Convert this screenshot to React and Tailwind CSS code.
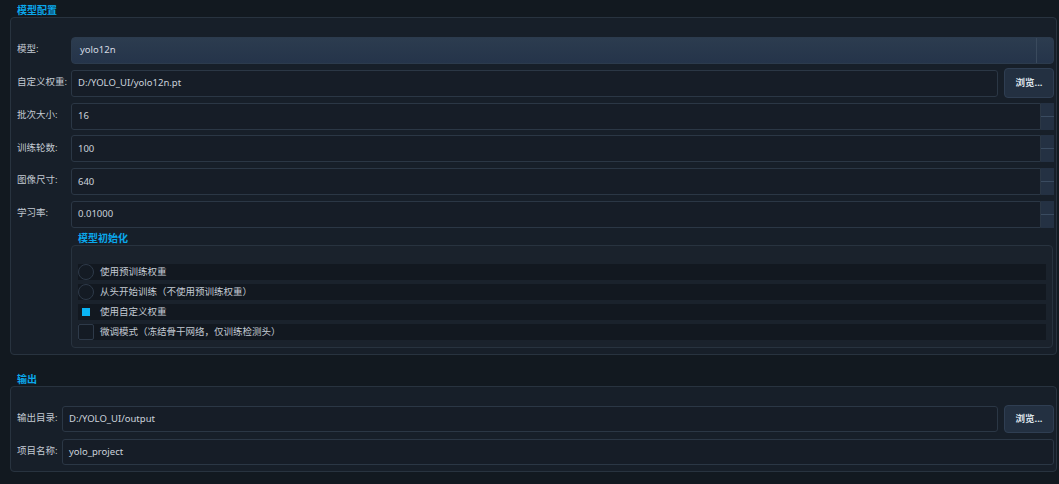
import React from "react";

const font = { fontFamily: '"Noto Sans", "Noto Sans CJK SC", sans-serif' };

function Label({ children, w }) {
  return (
    <div className={`${w} shrink-0 pl-[6px] pb-[3px] text-[9.5px] text-[#c3cad3] leading-none`}>{children}</div>
  );
}

function Input({ value, spin }) {
  return (
    <div className="flex-1 flex h-full min-w-0">
      <div
        className={`flex-1 h-full bg-[#161d27] border border-[#2b3745] flex items-center pl-[6px] text-[9.5px] text-[#ccd3dc] ${
          spin ? "rounded-l-[3px]" : "rounded-[3px]"
        }`}
      >
        {value}
      </div>
      {spin && (
        <div className="w-[13px] h-full flex flex-col">
          <div className="flex-1 bg-[#243143] border-b border-[#3a4b60]" />
          <div className="flex-1 bg-[#243143]" />
        </div>
      )}
    </div>
  );
}

function Button({ h }) {
  return (
    <div className={`w-[50px] ${h} shrink-0 ml-[6px] rounded-[4px] bg-[#233041] border border-[#2f3e52] flex items-center justify-center text-[9.5px] font-bold text-[#dfe5ec]`}>
      浏览...
    </div>
  );
}

function Radio({ children, checked }) {
  return (
    <div className="h-[16px] bg-[#121820] flex items-center">
      {checked ? (
        <div className="w-[16px] h-[16px] flex items-center justify-center">
          <div className="w-[8px] h-[8px] bg-[#0ab4f4]" />
        </div>
      ) : (
        <div className="w-[16px] h-[16px] rounded-full border border-[#2e3a49] bg-[#141b24]" />
      )}
      <div className="ml-[6px] text-[9.5px] text-[#c3cad3] leading-none">{children}</div>
    </div>
  );
}

export default function App() {
  return (
    <div style={font} className="w-[1059px] h-[484px] bg-[#121920] overflow-hidden pl-[10px] pr-[2px]">
      {/* Section 1 */}
      <div className="h-[17px] pl-[7px] flex items-end">
        <div className="text-[10px] font-bold text-[#0aa8ec] leading-none pb-[2px]">模型配置</div>
      </div>
      <div className="border border-[#28333f] rounded-[4px] bg-[#171f29] pt-[19px] pb-[6px] pr-[2px]">
        <div className="flex flex-col gap-[5.8px]">
          <div className="flex items-center h-[27px]">
            <Label w="w-[60px]">模型:</Label>
            <div className="flex-1 h-full rounded-[4px] border border-[#2c3b4d] bg-gradient-to-b from-[#2c3c4f] to-[#25344a] flex items-center">
              <div className="flex-1 pl-[8px] text-[9.5px] text-[#d5dbe3]">yolo12n</div>
              <div className="w-[17px] h-full border-l border-[#3a4a5d]" />
            </div>
          </div>
          <div className="flex items-center h-[27px]">
            <Label w="w-[60px]">自定义权重:</Label>
            <Input value="D:/YOLO_UI/yolo12n.pt" />
            <Button h="h-[30px]" />
          </div>
          <div className="flex items-center h-[27px]">
            <Label w="w-[60px]">批次大小:</Label>
            <Input value="16" spin />
          </div>
          <div className="flex items-center h-[27px]">
            <Label w="w-[60px]">训练轮数:</Label>
            <Input value="100" spin />
          </div>
          <div className="flex items-center h-[27px]">
            <Label w="w-[60px]">图像尺寸:</Label>
            <Input value="640" spin />
          </div>
          <div className="flex items-center h-[27px]">
            <Label w="w-[60px]">学习率:</Label>
            <Input value="0.01000" spin />
          </div>
        </div>
        <div className="ml-[60px] mr-[1px]">
          <div className="h-[17px] pl-[7px] flex items-end">
            <div className="text-[10px] font-bold text-[#0aa8ec] leading-none pb-[2px]">模型初始化</div>
          </div>
          <div className="border border-[#28333f] rounded-[4px] bg-[#1a222c] pt-[18px] pb-[7px] px-[6px] flex flex-col gap-[4px]">
            <Radio>使用预训练权重</Radio>
            <Radio>从头开始训练（不使用预训练权重）</Radio>
            <Radio checked>使用自定义权重</Radio>
            <div className="h-[16px] bg-[#121820] flex items-center">
              <div className="w-[16px] h-[16px] rounded-[2px] border border-[#2e3a49] bg-[#141b24]" />
              <div className="ml-[6px] text-[9.5px] text-[#c3cad3] leading-none">微调模式（冻结骨干网络，仅训练检测头）</div>
            </div>
          </div>
        </div>
      </div>

      {/* Section 2 */}
      <div className="h-[31px] pl-[7px] flex items-end">
        <div className="text-[10px] font-bold text-[#0aa8ec] leading-none pb-[2px]">输出</div>
      </div>
      <div className="border border-[#28333f] rounded-[4px] bg-[#171f29] pt-[19px] pb-[6px] pr-[2px]">
        <div className="flex flex-col gap-[7px]">
          <div className="flex items-center h-[26px]">
            <Label w="w-[51px]">输出目录:</Label>
            <Input value="D:/YOLO_UI/output" />
            <Button h="h-[28px]" />
          </div>
          <div className="flex items-center h-[26px]">
            <Label w="w-[51px]">项目名称:</Label>
            <Input value="yolo_project" />
          </div>
        </div>
      </div>
    </div>
  );
}
